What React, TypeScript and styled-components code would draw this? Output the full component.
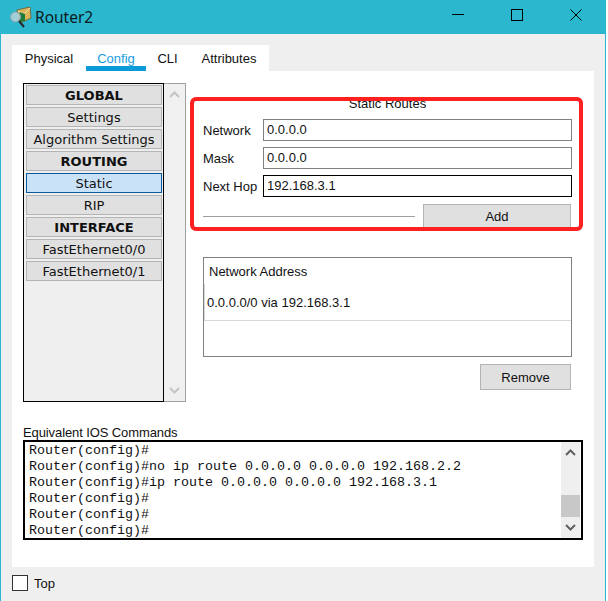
import styled, { createGlobalStyle } from "styled-components";

const Global = createGlobalStyle`
  html, body {
    margin: 0;
    padding: 0;
    background: #ffffff;
  }
  * {
    box-sizing: border-box;
  }
`;

const Win = styled.div`
  width: 606px;
  height: 601px;
  display: flex;
  flex-direction: column;
  background: #efefef;
  border-left: 1px solid #2bb7cd;
  border-right: 1px solid #2bb7cd;
  font-family: "Liberation Sans", Arial, sans-serif;
  font-size: 13px;
  color: #111111;
  overflow: hidden;
`;

const TitleBar = styled.div`
  height: 34px;
  flex: none;
  display: flex;
  align-items: center;
  background: #2bb7cd;
  padding-left: 9px;
`;
const TitleText = styled.div`
  margin-left: 3px;
  font-family: "Noto Sans", sans-serif;
  font-size: 15.5px;
  color: #0b1a1e;
`;
const WinButtons = styled.div`
  margin-left: auto;
  align-self: flex-start;
  display: flex;
  align-items: center;
`;
const WinButton = styled.div`
  width: 59px;
  height: 30px;
  display: flex;
  align-items: center;
  justify-content: center;
`;

const Body = styled.div`
  flex: 1;
  padding: 11px 11px 0;
  display: flex;
  flex-direction: column;
`;
const TabBar = styled.div`
  align-self: flex-start;
  display: grid;
  grid-template-columns: 74px 60px 43px 80px;
  height: 26px;
  background: #ffffff;
`;
const Tab = styled.div<{ $active?: boolean }>`
  text-align: center;
  line-height: 27px;
  height: 26px;
  color: ${(p) => (p.$active ? "#1b9ce2" : "#111111")};
  border-bottom: ${(p) => (p.$active ? "5px solid #0a9bd8" : "none")};
`;
const Card = styled.div`
  width: 582px;
  height: 496px;
  flex: none;
  background: #ffffff;
  padding: 12px 11px 0;
`;

const Main = styled.div`
  position: relative;
  display: flex;
  height: 319px;
`;
const NavBox = styled.div`
  width: 141px;
  border: 1px solid #000000;
  background: #efefef;
  padding: 1px 1px 0 2px;
  display: flex;
  flex-direction: column;
  gap: 2px;
`;
const NavItem = styled.div<{ $head?: boolean; $active?: boolean }>`
  height: 20px;
  line-height: 20px;
  text-align: center;
  font-family: "DejaVu Sans", Verdana, sans-serif;
  font-size: 13px;
  font-weight: ${(p) => (p.$head ? 700 : 400)};
  background: ${(p) => (p.$active ? "#cae2f7" : "#e0e0e0")};
  border: 1px solid ${(p) => (p.$active ? "#0a5a9c" : "#b4b4b4")};
  color: #111111;
`;
const NavScroll = styled.div`
  width: 22px;
  padding: 7px 0;
  display: flex;
  flex-direction: column;
  justify-content: space-between;
  align-items: center;
  background: #f0f0f0;
  border: 1px solid #a0a0a0;
  border-left: none;
`;

const Pane = styled.div`
  width: 369px;
  margin-left: 17px;
  display: flex;
  flex-direction: column;
`;
const Heading = styled.div`
  margin-top: 14px;
  height: 14px;
  line-height: 14px;
  text-align: center;
  margin-bottom: 8px;
`;
const Rows = styled.div`
  display: flex;
  flex-direction: column;
  gap: 6px;
`;
const Row = styled.div`
  display: flex;
  align-items: center;
  height: 22px;
`;
const Label = styled.div`
  width: 60px;
  flex: none;
`;
const Field = styled.div<{ $focus?: boolean }>`
  flex: 1;
  height: 22px;
  line-height: 20px;
  padding-left: 3px;
  background: #ffffff;
  border: 1px solid ${(p) => (p.$focus ? "#000000" : "#808080")};
`;
const AddRow = styled.div`
  margin-top: 7px;
  display: flex;
  align-items: center;
  gap: 8px;
  padding-right: 1px;
`;
const Rule = styled.div`
  width: 212px;
  height: 1px;
  background: #a0a0a0;
`;
const PushButton = styled.div<{ $w: number; $h: number }>`
  width: ${(p) => p.$w}px;
  height: ${(p) => p.$h}px;
  line-height: ${(p) => p.$h - 1}px;
  text-align: center;
  background: #e0e0e0;
  border: 1px solid #b4b4b4;
`;
const RouteList = styled.div`
  margin-top: 28px;
  height: 100px;
  border: 1px solid #808080;
`;
const ListHead = styled.div`
  height: 26px;
  line-height: 27px;
  padding-left: 5px;
`;
const ListRow = styled.div`
  height: 37px;
  line-height: 37px;
  padding-left: 2px;
  border-left: 1px solid #d8d8d8;
  border-bottom: 1px solid #d8d8d8;
`;
const RemoveWrap = styled.div`
  margin-top: 7px;
  display: flex;
  justify-content: flex-end;
  padding-right: 1px;
`;
const RedMark = styled.div`
  position: absolute;
  left: 167px;
  top: 14px;
  width: 393px;
  height: 134px;
  border: 4px solid #ff2020;
  border-radius: 6px;
  pointer-events: none;
`;

const IosLabel = styled.div`
  margin-top: 23px;
  height: 15px;
  line-height: 15px;
  letter-spacing: -0.1px;
`;
const Terminal = styled.div`
  display: flex;
  height: 100px;
  width: 560px;
  border: 2px solid #000000;
`;
const TermText = styled.div`
  flex: 1;
  padding: 1px 0 0 4px;
  font-family: "Liberation Mono", "Courier New", monospace;
  font-size: 13.33px;
  line-height: 16px;
  white-space: pre;
`;
const TermScroll = styled.div`
  position: relative;
  width: 19px;
  margin-right: 1px;
  background: #efefef;
  display: flex;
  flex-direction: column;
  justify-content: space-between;
  align-items: center;
  padding: 7px 0;
`;
const Thumb = styled.div`
  position: absolute;
  left: 0;
  right: 0;
  top: 53px;
  height: 22px;
  background: #c8c8c8;
`;

const Footer = styled.div`
  flex: 1;
  display: flex;
  align-items: center;
  gap: 6px;
  padding-bottom: 2px;
`;
const Check = styled.div`
  width: 16px;
  height: 16px;
  background: #ffffff;
  border: 1px solid #333333;
`;

const navItems = [
  { label: "GLOBAL", head: true },
  { label: "Settings" },
  { label: "Algorithm Settings" },
  { label: "ROUTING", head: true },
  { label: "Static", active: true },
  { label: "RIP" },
  { label: "INTERFACE", head: true },
  { label: "FastEthernet0/0" },
  { label: "FastEthernet0/1" },
];

const termLines = [
  "Router(config)#",
  "Router(config)#no ip route 0.0.0.0 0.0.0.0 192.168.2.2",
  "Router(config)#ip route 0.0.0.0 0.0.0.0 192.168.3.1",
  "Router(config)#",
  "Router(config)#",
  "Router(config)#",
];

function Chevron({ up, color }: { up?: boolean; color: string }) {
  return (
    <svg width="11" height="7" viewBox="0 0 11 7">
      <polyline
        points={up ? "1,6 5.5,1.5 10,6" : "1,1 5.5,5.5 10,1"}
        fill="none"
        stroke={color}
        strokeWidth="2"
      />
    </svg>
  );
}

function RouterIcon() {
  return (
    <svg width="22" height="22" viewBox="0 0 22 22">
      <path d="M7 4 L20 1 L21 12 L10 17 Z" fill="#d9b45a" stroke="#6d5a2a" strokeWidth="0.8" />
      <path d="M8 5 L14 8 L20 2" fill="none" stroke="#f4e2a8" strokeWidth="1" />
      <path d="M9.5 6 L15 8 L15 15 L10 16 Z" fill="#1f7a3a" />
      <circle cx="5.5" cy="11" r="5" fill="#b7d3d8" fillOpacity="0.85" stroke="#8aa6ac" strokeWidth="1" />
      <path d="M9 15 L14 21" stroke="#26282a" strokeWidth="2" />
    </svg>
  );
}

export default function App() {
  return (
    <>
      <Global />
      <Win>
        <TitleBar>
          <RouterIcon />
          <TitleText>Router2</TitleText>
          <WinButtons>
            <WinButton>
              <svg width="12" height="12" viewBox="0 0 12 12">
                <path d="M0 5.5 H12" stroke="#000" strokeWidth="1" />
              </svg>
            </WinButton>
            <WinButton>
              <svg width="12" height="12" viewBox="0 0 12 12">
                <rect x="0.5" y="0.5" width="11" height="11" fill="none" stroke="#000" strokeWidth="1" />
              </svg>
            </WinButton>
            <WinButton>
              <svg width="12" height="12" viewBox="0 0 12 12">
                <path d="M0.5 0.5 L11.5 11.5 M11.5 0.5 L0.5 11.5" stroke="#000" strokeWidth="1" />
              </svg>
            </WinButton>
          </WinButtons>
        </TitleBar>
        <Body>
          <TabBar>
            <Tab>Physical</Tab>
            <Tab $active>Config</Tab>
            <Tab>CLI</Tab>
            <Tab>Attributes</Tab>
          </TabBar>
          <Card>
            <Main>
              <NavBox>
                {navItems.map((n) => (
                  <NavItem key={n.label} $head={n.head} $active={n.active}>
                    {n.label}
                  </NavItem>
                ))}
              </NavBox>
              <NavScroll>
                <Chevron up color="#c4c4c4" />
                <Chevron color="#c4c4c4" />
              </NavScroll>
              <Pane>
                <Heading>Static Routes</Heading>
                <Rows>
                  <Row>
                    <Label>Network</Label>
                    <Field>0.0.0.0</Field>
                  </Row>
                  <Row>
                    <Label>Mask</Label>
                    <Field>0.0.0.0</Field>
                  </Row>
                  <Row>
                    <Label>Next Hop</Label>
                    <Field $focus>192.168.3.1</Field>
                  </Row>
                </Rows>
                <AddRow>
                  <Rule />
                  <PushButton $w={148} $h={25}>
                    Add
                  </PushButton>
                </AddRow>
                <RouteList>
                  <ListHead>Network Address</ListHead>
                  <ListRow>0.0.0.0/0 via 192.168.3.1</ListRow>
                </RouteList>
                <RemoveWrap>
                  <PushButton $w={91} $h={26}>
                    Remove
                  </PushButton>
                </RemoveWrap>
              </Pane>
              <RedMark />
            </Main>
            <IosLabel>Equivalent IOS Commands</IosLabel>
            <Terminal>
              <TermText>{termLines.join("\n")}</TermText>
              <TermScroll>
                <Chevron up color="#606060" />
                <Thumb />
                <Chevron color="#606060" />
              </TermScroll>
            </Terminal>
          </Card>
          <Footer>
            <Check />
            <span>Top</span>
          </Footer>
        </Body>
      </Win>
    </>
  );
}
